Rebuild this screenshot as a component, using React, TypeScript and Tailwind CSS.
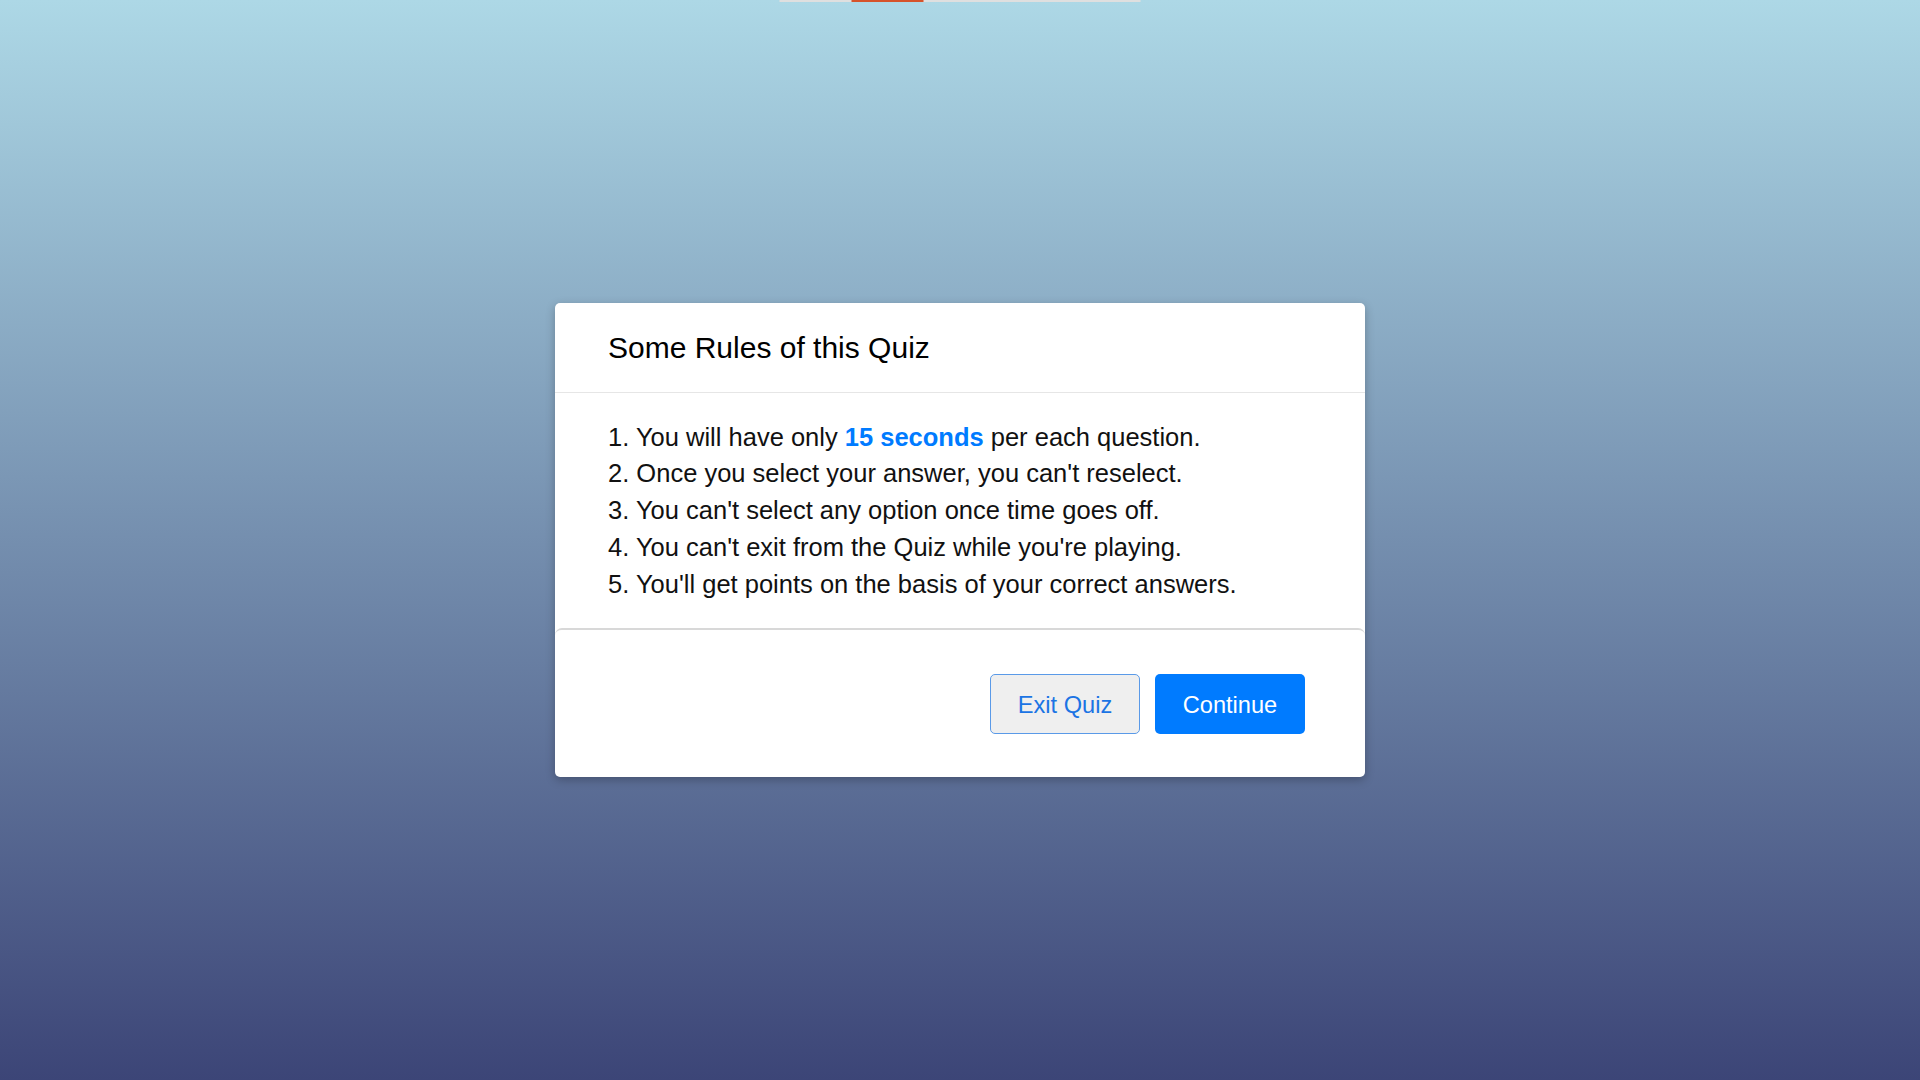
import React from "react";

const rules: React.ReactNode[] = [
  <>
    You will have only <span className="font-bold text-[#007bff]">15 seconds</span> per each question.
  </>,
  <>Once you select your answer, you can't reselect.</>,
  <>You can't select any option once time goes off.</>,
  <>You can't exit from the Quiz while you're playing.</>,
  <>You'll get points on the basis of your correct answers.</>,
];

export default function App() {
  return (
    <div
      className="relative flex h-screen w-full items-center justify-center bg-[linear-gradient(to_bottom,#add8e6,#3c4577)]"
      style={{ fontFamily: '"Liberation Sans", Arial, sans-serif' }}
    >
      <div className="absolute left-1/2 top-0 flex h-[2px] w-[361px] -translate-x-1/2 bg-[#dfdfdf]">
        <div className="ml-[72px] h-full w-[72px] bg-[#d6532b]" />
      </div>

      <div className="flex w-[810px] flex-col rounded-[5px] bg-white shadow-[0_3px_10px_rgba(0,0,0,0.25)]">
        <div className="border-b border-[#e6e6e6] pl-[53px] pt-[28px] pb-[27px]">
          <h1 className="text-[30px] leading-[34px] text-black">Some Rules of this Quiz</h1>
        </div>
        <ol className="pl-[53px] pt-[26px] pb-[26px] text-[25.5px] leading-[36.7px] text-[#111]">
          {rules.map((r, i) => (
            <li key={i}>
              {i + 1}. {r}
            </li>
          ))}
        </ol>
        <div className="flex justify-end gap-[15px] rounded-t-[7px] border-t-2 border-[#d8d8d8] pt-[44px] pb-[43px] pr-[60px]">
          <button className="h-[60px] w-[150px] rounded-[5px] border border-[#5a9ae8] bg-[#efefef] pt-[2px] text-[23.6px] text-[#1b74e4]">
            Exit Quiz
          </button>
          <button className="h-[60px] w-[150px] rounded-[5px] bg-[#007bff] pt-[2px] text-[23.6px] text-white">
            Continue
          </button>
        </div>
      </div>
    </div>
  );
}
